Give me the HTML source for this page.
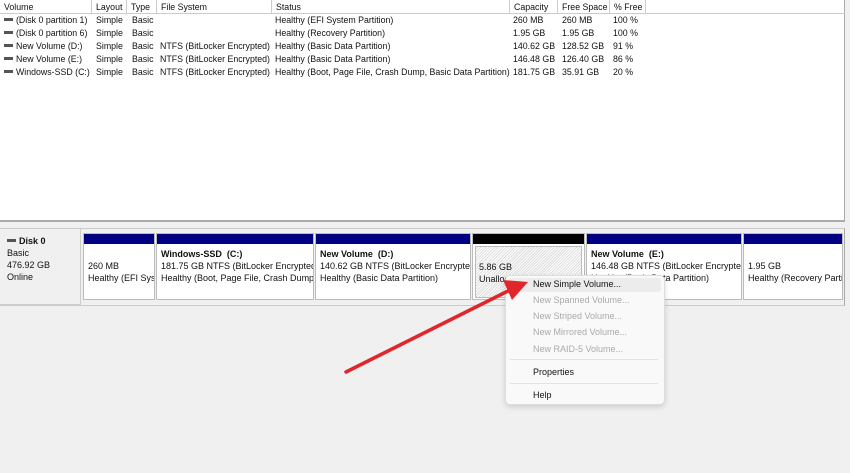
<!DOCTYPE html><html><head><style>
*{margin:0;padding:0;box-sizing:border-box}
body{width:850px;height:473px;background:#f0f0f0;font-family:"Liberation Sans",sans-serif;font-size:8.8px;color:#111;position:relative;overflow:hidden}
.a{position:absolute;white-space:nowrap}
.top{position:absolute;left:0;top:0;width:845px;height:222px;background:#fff;border-right:1px solid #aaa;border-bottom:2px solid #aaa}
.hd{position:absolute;top:0;height:14px;border-right:1px solid #ccc;border-bottom:1px solid #ccc;padding-left:4px;line-height:14px}
.ic{display:inline-block;width:9px;height:3px;background:#555;vertical-align:middle;margin-right:3px;margin-top:-2px}
.part{position:absolute;top:233px;height:67px;background:#fff;border:1px solid #bbb;font-size:9px}
.bar{height:10px;background:#000080}
.pt{padding:4px 0 0 4px;line-height:12px;white-space:nowrap;overflow:hidden}
.m{position:absolute;left:533px;color:#aaa;font-size:9px}
.r{line-height:12.95px}
</style></head><body>
<div class="top">
<div class="hd" style="left:0;width:92px">Volume</div>
<div class="hd" style="left:92px;width:35px">Layout</div>
<div class="hd" style="left:127px;width:30px">Type</div>
<div class="hd" style="left:157px;width:115px">File System</div>
<div class="hd" style="left:272px;width:238px">Status</div>
<div class="hd" style="left:510px;width:48px">Capacity</div>
<div class="hd" style="left:558px;width:52px">Free Space</div>
<div class="hd" style="left:610px;width:36px">% Free</div>
<div class="hd" style="left:646px;width:199px;border-right:none"></div>
</div>
<div class="a r" style="left:4px;top:14px">
<div><span class="ic"></span>(Disk 0 partition 1)</div><div><span class="ic"></span>(Disk 0 partition 6)</div><div><span class="ic"></span>New Volume (D:)</div><div><span class="ic"></span>New Volume (E:)</div><div><span class="ic"></span>Windows-SSD (C:)</div></div>
<div class="a r" style="left:96px;top:14px">Simple<br>Simple<br>Simple<br>Simple<br>Simple</div>
<div class="a r" style="left:132px;top:14px">Basic<br>Basic<br>Basic<br>Basic<br>Basic</div>
<div class="a r" style="left:160px;top:14px"><br><br>NTFS (BitLocker Encrypted)<br>NTFS (BitLocker Encrypted)<br>NTFS (BitLocker Encrypted)</div>
<div class="a r" style="left:275px;top:14px">Healthy (EFI System Partition)<br>Healthy (Recovery Partition)<br>Healthy (Basic Data Partition)<br>Healthy (Basic Data Partition)<br>Healthy (Boot, Page File, Crash Dump, Basic Data Partition)</div>
<div class="a r" style="left:513px;top:14px">260 MB<br>1.95 GB<br>140.62 GB<br>146.48 GB<br>181.75 GB</div>
<div class="a r" style="left:562px;top:14px">260 MB<br>1.95 GB<br>128.52 GB<br>126.40 GB<br>35.91 GB</div>
<div class="a r" style="left:613px;top:14px">100 %<br>100 %<br>91 %<br>86 %<br>20 %</div>
<div class="a" style="left:0;top:228px;width:845px;height:78px;border-top:1px solid #ccc;border-bottom:1px solid #ccc;border-right:1px solid #aaa"></div>
<div class="a" style="left:0;top:229px;width:81px;height:76px;background:#f0f0f0;border-right:1px solid #ccc;border-bottom:1px solid #ccc;padding:6px 0 0 7px;line-height:12px;font-size:9px"><b><span class="ic"></span>Disk 0</b><br>Basic<br>476.92 GB<br>Online</div>
<div class="part" style="left:83px;width:72px"><div class="bar"></div><div class="pt"><br>260 MB<br>Healthy (EFI Sys</div></div>
<div class="part" style="left:156px;width:158px"><div class="bar"></div><div class="pt"><b>Windows-SSD&nbsp; (C:)</b><br>181.75 GB NTFS (BitLocker Encrypted)<br>Healthy (Boot, Page File, Crash Dump,</div></div>
<div class="part" style="left:315px;width:156px"><div class="bar"></div><div class="pt"><b>New Volume&nbsp; (D:)</b><br>140.62 GB NTFS (BitLocker Encrypted<br>Healthy (Basic Data Partition)</div></div>
<div class="part" style="left:472px;width:113px"><div class="bar" style="background:#000"></div><div class="pt" style="margin:2px;padding:2px 0 0 3px;height:52px;background:repeating-linear-gradient(135deg,#fff 0 1px,#ddd 1px 2px);border:1px solid #bbb"><br>5.86 GB<br>Unalloc</div></div>
<div class="part" style="left:586px;width:156px"><div class="bar"></div><div class="pt"><b>New Volume&nbsp; (E:)</b><br>146.48 GB NTFS (BitLocker Encrypted<br>Healthy (Basic Data Partition)</div></div>
<div class="part" style="left:743px;width:100px"><div class="bar"></div><div class="pt"><br>1.95 GB<br>Healthy (Recovery Parti</div></div>
<div class="a" style="left:505px;top:275px;width:160px;height:130px;background:#f9f9f9;border:1px solid #ddd;border-radius:5px;box-shadow:0 2px 6px rgba(0,0,0,.15)"></div>
<div class="a" style="left:509px;top:278px;width:152px;height:14px;background:#ececec;border-radius:3px"></div>
<div class="m" style="top:279px;color:#111">New Simple Volume...</div>
<div class="m" style="top:295px">New Spanned Volume...</div>
<div class="m" style="top:311px">New Striped Volume...</div>
<div class="m" style="top:327px">New Mirrored Volume...</div>
<div class="m" style="top:344px">New RAID-5 Volume...</div>
<div class="a" style="left:510px;top:359px;width:148px;height:1px;background:#e2e2e2"></div>
<div class="m" style="top:367px;color:#111">Properties</div>
<div class="a" style="left:510px;top:383px;width:148px;height:1px;background:#e2e2e2"></div>
<div class="m" style="top:390px;color:#111">Help</div>
<svg class="a" style="left:0;top:0" width="850" height="473"><line x1="346" y1="372" x2="510" y2="290" stroke="#e0262b" stroke-width="3.5" stroke-linecap="round"/><polygon points="528,282 503,280 512,300" fill="#e0262b"/></svg>
</body></html>
